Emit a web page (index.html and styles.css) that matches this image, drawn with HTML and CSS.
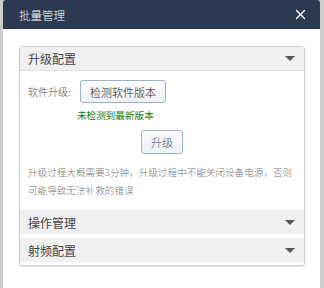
FILE: index.html
```html
<!DOCTYPE html>
<html lang="zh-CN">
<head>
    <meta charset="UTF-8">
    <title>批量管理</title>
    <link rel="stylesheet" href="styles.css">
</head>
<body>
    <div class="dialog">
        <div class="dialog-head">
            <span class="dialog-title">批量管理</span>
            <svg class="close" width="11" height="11" viewBox="0 0 11 11">
                <path d="M1.5 1.5L9.5 9.5M9.5 1.5L1.5 9.5" stroke="#fff" stroke-width="1.4" stroke-linecap="round"/>
            </svg>
        </div>
        <div class="dialog-body">
            <div class="panel">
                <div class="panel-head">
                    <span>升级配置</span>
                    <i class="caret"></i>
                </div>
                <div class="panel-content">
                    <div class="row">
                        <span class="label">软件升级:</span>
                        <button class="btn">检测软件版本</button>
                    </div>
                    <p class="status">未检测到最新版本</p>
                    <div class="center">
                        <button class="btn btn-up">升级</button>
                    </div>
                    <p class="tip">升级过程大概需要3分钟，升级过程中不能关闭设备电源，否则可能导致无法补救的错误</p>
                </div>
                <div class="panel-head sub">
                    <span>操作管理</span>
                    <i class="caret"></i>
                </div>
                <div class="panel-head sub">
                    <span>射频配置</span>
                    <i class="caret"></i>
                </div>
            </div>
        </div>
    </div>
</body>
</html>
```

FILE: styles.css
```css
* {
    margin: 0;
    padding: 0;
    box-sizing: border-box;
    font-family: "Noto Sans CJK SC", "Liberation Sans", sans-serif;
}

body {
    width: 324px;
    height: 288px;
    overflow: hidden;
    background-color: #cbcbcb;
}

.dialog {
    margin-left: 3px;
    width: 317px;
    height: 288px;
    background-color: #fff;
    border-radius: 3px 3px 0 0;
    overflow: hidden;
}

.dialog-head {
    height: 29px;
    background-color: #2b3a50;
    color: #fff;
    display: flex;
    align-items: center;
    justify-content: space-between;
    padding: 0 14px 0 16px;
}

.dialog-title {
    font-size: 11.5px;
    font-weight: 300;
}

.dialog-body {
    padding: 17px 15px 0 16px;
}

.panel {
    border: 1px solid #cfcfcf;
    border-radius: 3px;
    box-shadow: 0 1px 2px rgba(0, 0, 0, 0.12);
    padding-bottom: 3px;
}

.panel-head {
    height: 24px;
    background-color: #f0f0f0;
    border-bottom: 1px solid #e0e0e0;
    display: flex;
    align-items: center;
    justify-content: space-between;
    padding: 0 9px 0 8px;
    font-size: 12px;
    color: #444;
}

.panel-head.sub {
    border-bottom: none;
    margin-top: 4px;
}

.caret {
    width: 0;
    height: 0;
    border-left: 5px solid transparent;
    border-right: 5px solid transparent;
    border-top: 5px solid #555;
}

.panel-content {
    padding: 9px 8px 7px 8px;
    font-weight: 300;
}

.row {
    display: flex;
    align-items: center;
}

.label {
    font-size: 10px;
    color: #555;
    width: 52px;
}

.btn {
    height: 23px;
    padding: 0 9px;
    font-size: 11px;
    font-weight: 300;
    color: #222;
    background: linear-gradient(#fbfcfd, #eef2f6);
    border: 1px solid #9db1c7;
    border-radius: 3px;
}

.status {
    margin: 3px 0 0 49px;
    font-size: 9.6px;
    font-weight: 400;
    line-height: 18px;
    color: #0f7a0f;
}

.center {
    margin-top: 4px;
    text-align: center;
}

.btn-up {
    height: 24px;
    width: 42px;
    padding: 0;
    color: #3d5670;
}

.tip {
    margin-top: 9px;
    font-size: 9.6px;
    line-height: 18px;
    color: #777;
}
```
